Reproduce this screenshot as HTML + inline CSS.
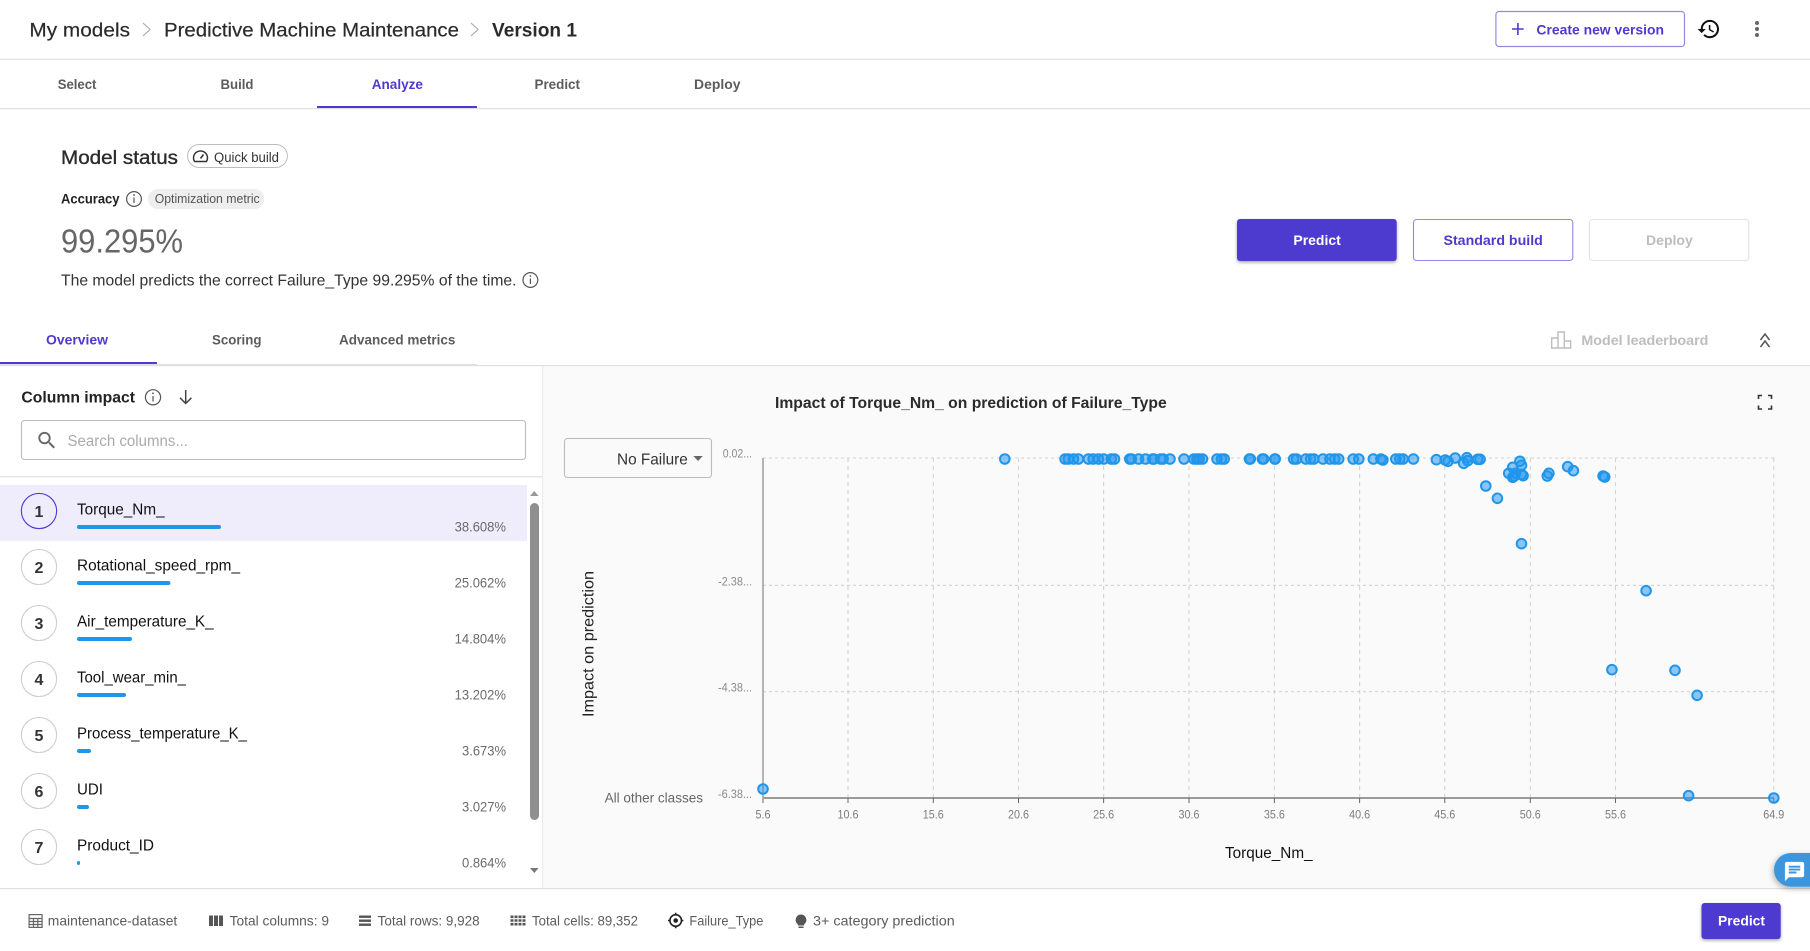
<!DOCTYPE html>
<html lang="en">
<head>
<meta charset="utf-8">
<title>Predictive Machine Maintenance - Version 1</title>
<style>
html,body{margin:0;padding:0;background:#fff;width:1810px;height:951px;overflow:hidden}
svg{display:block}
text{font-family:"Liberation Sans",Arial,sans-serif}
.b{font-weight:700}
.tab{font-size:14px;font-weight:700;fill:#5c5c5c}
.pri{fill:#4e3acf}
.name{font-size:16px;fill:#111}
.pct{font-size:14px;fill:#6b6b6b}
.num{font-size:16px;font-weight:700;fill:#333;text-anchor:middle}
.foot{font-size:14px;fill:#5c5c5c}
.xt{font-size:12px;fill:#7d7d7d;text-anchor:middle}
.yt{font-size:12px;fill:#8a8a8a}
.pts circle{fill:rgba(33,150,243,.52);stroke:#2196e8;stroke-width:2}
</style>
</head>
<body>
<svg xmlns="http://www.w3.org/2000/svg" width="1810" height="951" viewBox="0 0 1810 951">
<defs>
<filter id="sh" x="-20%" y="-20%" width="140%" height="150%"><feDropShadow dx="0" dy="1.5" stdDeviation="1.5" flood-color="#000" flood-opacity=".35"/></filter>
<filter id="sh2" x="-30%" y="-30%" width="160%" height="170%"><feDropShadow dx="-1" dy="2" stdDeviation="3" flood-color="#000" flood-opacity=".3"/></filter>
</defs>
<rect width="1810" height="951" fill="#fff"/>

<!-- breadcrumb -->
<text x="29.4" y="36.6" font-size="19.5" fill="#2b2b2b" stroke="#2b2b2b" stroke-width=".2" textLength="100.6" lengthAdjust="spacingAndGlyphs">My models</text>
<path d="M143 23l7 6.5-7 6.5" fill="none" stroke="#a8a8a8" stroke-width="1.1"/>
<text x="164" y="36.6" font-size="19.5" fill="#2b2b2b" stroke="#2b2b2b" stroke-width=".2" textLength="295" lengthAdjust="spacingAndGlyphs">Predictive Machine Maintenance</text>
<path d="M471 23l7 6.5-7 6.5" fill="none" stroke="#a8a8a8" stroke-width="1.1"/>
<text x="492" y="36.6" font-size="19.5" class="b" fill="#2b2b2b" textLength="85" lengthAdjust="spacingAndGlyphs">Version 1</text>

<rect x="1495.9" y="11.5" width="188.6" height="35" rx="3" fill="#fff" stroke="#9488e6" stroke-width="1.2"/>
<path d="M1512 29h11.7M1517.9 23v12" stroke="#4e3acf" stroke-width="1.6" fill="none"/>
<text x="1536.4" y="34.3" font-size="14" class="b pri" textLength="127.6" lengthAdjust="spacingAndGlyphs">Create new version</text>
<g transform="translate(1696.6,16.8) scale(1.02)"><path fill="#111" d="M13 3c-4.97 0-9 4.03-9 9H1l3.89 3.89.07.14L9 12H6c0-3.87 3.13-7 7-7s7 3.13 7 7-3.13 7-7 7c-1.93 0-3.68-.79-4.94-2.06l-1.42 1.42C8.27 19.99 10.51 21 13 21c4.97 0 9-4.03 9-9s-4.03-9-9-9zm-1 5v5l4.28 2.54.72-1.21-3.5-2.08V8H12z"/></g>
<g fill="#666"><circle cx="1757" cy="23" r="2"/><circle cx="1757" cy="29" r="2"/><circle cx="1757" cy="35" r="2"/></g>
<rect x="0" y="58.6" width="1810" height="1.2" fill="#e0e0e0"/>

<!-- top tabs -->
<text x="57.7" y="89" class="tab" textLength="38.7" lengthAdjust="spacingAndGlyphs">Select</text>
<text x="220.5" y="89" class="tab" textLength="33" lengthAdjust="spacingAndGlyphs">Build</text>
<text x="371.7" y="89" class="tab" style="fill:#4e3acf" textLength="51.3" lengthAdjust="spacingAndGlyphs">Analyze</text>
<text x="534.5" y="89" class="tab" textLength="45.5" lengthAdjust="spacingAndGlyphs">Predict</text>
<text x="694" y="89" class="tab" textLength="46.5" lengthAdjust="spacingAndGlyphs">Deploy</text>
<rect x="0" y="108" width="1810" height="1.2" fill="#e0e0e0"/>
<rect x="317" y="106" width="160" height="2" fill="#4e3acf"/>

<!-- model status -->
<text x="61" y="164" font-size="19" fill="#2b2b2b" textLength="117" lengthAdjust="spacingAndGlyphs" stroke="#2b2b2b" stroke-width=".35">Model status</text>
<rect x="187.6" y="144.5" width="99.8" height="23" rx="11.5" fill="#fff" stroke="#bdbdbd" stroke-width="1"/>
<path d="M194.5 161.5a7 7 0 1 1 12 0z" fill="none" stroke="#333" stroke-width="1.4" stroke-linejoin="round"/>
<path d="M200.5 158.5l3-4" stroke="#333" stroke-width="1.6"/>
<text x="214" y="162" font-size="13.5" fill="#333" textLength="65" lengthAdjust="spacingAndGlyphs">Quick build</text>

<text x="61" y="203.3" font-size="14" class="b" fill="#222" textLength="58.5" lengthAdjust="spacingAndGlyphs">Accuracy</text>
<g fill="none" stroke="#555" stroke-width="1.2"><circle cx="134" cy="199" r="7.4"/><path d="M134 197.5v5.5"/></g><circle cx="134" cy="195" r=".9" fill="#555"/>
<rect x="148" y="189" width="116.3" height="20" rx="10" fill="#eeeeee"/>
<text x="154.7" y="203" font-size="12.5" fill="#555" textLength="105" lengthAdjust="spacingAndGlyphs">Optimization metric</text>

<text x="61" y="252.3" font-size="33" fill="#666" textLength="122" lengthAdjust="spacingAndGlyphs">99.295%</text>
<text x="61" y="285.7" font-size="16" fill="#333" textLength="455.5" lengthAdjust="spacingAndGlyphs">The model predicts the correct Failure_Type 99.295% of the time.</text>
<g fill="none" stroke="#555" stroke-width="1.2"><circle cx="530.4" cy="280" r="7.4"/><path d="M530.4 278.5v5.5"/></g><circle cx="530.4" cy="276" r=".9" fill="#555"/>

<!-- action buttons -->
<rect x="1237" y="219" width="159.7" height="42" rx="3" fill="#4e3acf" filter="url(#sh)"/>
<text x="1293.4" y="245" font-size="14" class="b" fill="#fff" textLength="47.4" lengthAdjust="spacingAndGlyphs">Predict</text>
<rect x="1413.5" y="219.5" width="159.3" height="41" rx="3" fill="#fff" stroke="#9488e6" stroke-width="1.1"/>
<text x="1443.5" y="245" font-size="14" class="b pri" textLength="99.3" lengthAdjust="spacingAndGlyphs">Standard build</text>
<rect x="1589.5" y="219.5" width="159.3" height="41" rx="3" fill="#fff" stroke="#e2e2e2" stroke-width="1.1"/>
<text x="1646" y="245" font-size="14" class="b" fill="#bdbdbd" textLength="46.8" lengthAdjust="spacingAndGlyphs">Deploy</text>

<!-- sub tabs -->
<text x="46" y="344.5" class="tab" style="fill:#4e3acf" textLength="62" lengthAdjust="spacingAndGlyphs">Overview</text>
<text x="212" y="344.5" class="tab" textLength="49.5" lengthAdjust="spacingAndGlyphs">Scoring</text>
<text x="339" y="344.5" class="tab" textLength="116.4" lengthAdjust="spacingAndGlyphs">Advanced metrics</text>
<rect x="0" y="365" width="1810" height="1.2" fill="#e0e0e0"/>
<rect x="0" y="364" width="477" height="1.6" fill="#e0e0e0"/>
<rect x="0" y="362" width="157" height="2" fill="#4e3acf"/>

<path d="M1551.7 348v-10h6.3v10zM1558 348v-16h6.3v16zM1564.3 348v-7h6.3v7z" fill="none" stroke="#bdbdbd" stroke-width="1.4"/>
<text x="1581.4" y="345" class="tab" style="fill:#bdbdbd" textLength="127" lengthAdjust="spacingAndGlyphs">Model leaderboard</text>
<path d="M1760.5 340l4.5-6 4.5 6M1760.5 347l4.5-6 4.5 6" fill="none" stroke="#555" stroke-width="1.5"/>

<!-- chart panel bg -->
<rect x="543" y="366.2" width="1267" height="522" fill="#fafafa"/>
<rect x="542" y="366" width="1.2" height="522" fill="#ececec"/>

<!-- left panel -->
<text x="21.4" y="402.5" font-size="16" class="b" fill="#222" textLength="113.6" lengthAdjust="spacingAndGlyphs">Column impact</text>
<g fill="none" stroke="#555" stroke-width="1.2"><circle cx="153" cy="397.3" r="7.6"/><path d="M153 396v5.5"/></g><circle cx="153" cy="393.3" r=".9" fill="#555"/>
<path d="M185.7 390v13.5M180 397.8l5.7 5.7 5.7-5.7" fill="none" stroke="#444" stroke-width="1.5"/>
<rect x="21.5" y="420.5" width="504" height="39" rx="3" fill="#fff" stroke="#bcbcbc" stroke-width="1.1"/>
<g transform="translate(35.5,429) scale(.95)"><path fill="#666" d="M15.5 14h-.79l-.28-.27C15.41 12.59 16 11.11 16 9.5 16 5.91 13.09 3 9.5 3S3 5.91 3 9.5 5.91 16 9.5 16c1.61 0 3.09-.59 4.23-1.57l.27.28v.79l5 4.99L20.49 19l-4.99-5zm-6 0C7.01 14 5 11.99 5 9.5S7.01 5 9.5 5 14 7.01 14 9.5 11.99 14 9.5 14z"/></g>
<text x="67.5" y="445.8" font-size="15.5" fill="#ababab" textLength="120.5" lengthAdjust="spacingAndGlyphs">Search columns...</text>
<rect x="0" y="476.2" width="542" height="1.2" fill="#e0e0e0"/>

<rect x="0" y="485" width="527" height="56" fill="#efecfc"/>
<g fill="#fff" stroke="#cfcfcf" stroke-width="1.1">
<circle cx="39" cy="511" r="17.6" fill="#efecfc" stroke="#4e3acf"/>
<circle cx="39" cy="567" r="17.6"/>
<circle cx="39" cy="623" r="17.6"/>
<circle cx="39" cy="679" r="17.6"/>
<circle cx="39" cy="735" r="17.6"/>
<circle cx="39" cy="791" r="17.6"/>
<circle cx="39" cy="847" r="17.6"/>
</g>
<text x="39" y="517" class="num">1</text>
<text x="39" y="573" class="num">2</text>
<text x="39" y="629" class="num">3</text>
<text x="39" y="685" class="num">4</text>
<text x="39" y="741" class="num">5</text>
<text x="39" y="797" class="num">6</text>
<text x="39" y="853" class="num">7</text>

<text x="77" y="514.4" class="name" textLength="87.6" lengthAdjust="spacingAndGlyphs">Torque_Nm_</text>
<text x="77" y="570.4" class="name" textLength="163" lengthAdjust="spacingAndGlyphs">Rotational_speed_rpm_</text>
<text x="77" y="626.4" class="name" textLength="136.6" lengthAdjust="spacingAndGlyphs">Air_temperature_K_</text>
<text x="77" y="682.4" class="name" textLength="109" lengthAdjust="spacingAndGlyphs">Tool_wear_min_</text>
<text x="77" y="738.4" class="name" textLength="170" lengthAdjust="spacingAndGlyphs">Process_temperature_K_</text>
<text x="77" y="794.4" class="name" textLength="26" lengthAdjust="spacingAndGlyphs">UDI</text>
<text x="77" y="850.4" class="name" textLength="77" lengthAdjust="spacingAndGlyphs">Product_ID</text>

<g fill="#2196e8">
<rect x="77" y="525" width="144" height="4" rx="2"/>
<rect x="77" y="581" width="93.4" height="4" rx="2"/>
<rect x="77" y="637" width="55" height="4" rx="2"/>
<rect x="77" y="693" width="49" height="4" rx="2"/>
<rect x="77" y="749" width="14" height="4" rx="2"/>
<rect x="77" y="805" width="12" height="4" rx="2"/>
<rect x="77" y="861" width="3" height="4" rx="1.5"/>
</g>

<text x="454.6" y="531.7" class="pct" textLength="51.4" lengthAdjust="spacingAndGlyphs">38.608%</text>
<text x="454.6" y="587.7" class="pct" textLength="51.4" lengthAdjust="spacingAndGlyphs">25.062%</text>
<text x="454.6" y="643.7" class="pct" textLength="51.4" lengthAdjust="spacingAndGlyphs">14.804%</text>
<text x="454.6" y="699.7" class="pct" textLength="51.4" lengthAdjust="spacingAndGlyphs">13.202%</text>
<text x="462" y="755.7" class="pct" textLength="44" lengthAdjust="spacingAndGlyphs">3.673%</text>
<text x="462" y="811.7" class="pct" textLength="44" lengthAdjust="spacingAndGlyphs">3.027%</text>
<text x="462" y="867.7" class="pct" textLength="44" lengthAdjust="spacingAndGlyphs">0.864%</text>

<!-- scrollbar -->
<path d="M530 496l4.3-5 4.3 5z" fill="#999"/>
<rect x="530" y="503" width="9" height="317" rx="4.5" fill="#8f8f8f"/>
<path d="M530 868l4.3 5 4.3-5z" fill="#777"/>

<!-- chart -->
<g fill="none" stroke="#d2d2d2" stroke-width="1.1">
<path stroke-dasharray="3 3" d="M763 458H1774M763 585.3H1774M763 691.7H1774"/>
<path stroke-dasharray="4 4" d="M848 458V798M933.3 458V798M1018.5 458V798M1103.6 458V798M1189 458V798M1274.4 458V798M1359.6 458V798M1444.8 458V798M1530.3 458V798M1615.5 458V798M1773.8 458V798"/>
</g>
<path d="M763 458V803" stroke="#a3a3a3" stroke-width="1.6" fill="none"/>
<path d="M763 798H1774" stroke="#9b9b9b" stroke-width="2" fill="none"/>
<path d="M848 798v5M933.3 798v5M1018.5 798v5M1103.6 798v5M1189 798v5M1274.4 798v5M1359.6 798v5M1444.8 798v5M1530.3 798v5M1615.5 798v5M1773.8 798v5" stroke="#666" stroke-width="1" fill="none"/>

<text x="722.8" y="457.7" class="yt" textLength="29.2" lengthAdjust="spacingAndGlyphs">0.02...</text>
<text x="718" y="585.7" class="yt" textLength="34" lengthAdjust="spacingAndGlyphs">-2.38...</text>
<text x="718" y="691.7" class="yt" textLength="34" lengthAdjust="spacingAndGlyphs">-4.38...</text>
<text x="718" y="798" class="yt" textLength="34" lengthAdjust="spacingAndGlyphs">-6.38...</text>

<text x="763" y="818.7" class="xt" textLength="15" lengthAdjust="spacingAndGlyphs">5.6</text>
<text x="848" y="818.7" class="xt" textLength="21" lengthAdjust="spacingAndGlyphs">10.6</text>
<text x="933.3" y="818.7" class="xt" textLength="21" lengthAdjust="spacingAndGlyphs">15.6</text>
<text x="1018.5" y="818.7" class="xt" textLength="21" lengthAdjust="spacingAndGlyphs">20.6</text>
<text x="1103.6" y="818.7" class="xt" textLength="21" lengthAdjust="spacingAndGlyphs">25.6</text>
<text x="1189" y="818.7" class="xt" textLength="21" lengthAdjust="spacingAndGlyphs">30.6</text>
<text x="1274.4" y="818.7" class="xt" textLength="21" lengthAdjust="spacingAndGlyphs">35.6</text>
<text x="1359.6" y="818.7" class="xt" textLength="21" lengthAdjust="spacingAndGlyphs">40.6</text>
<text x="1444.8" y="818.7" class="xt" textLength="21" lengthAdjust="spacingAndGlyphs">45.6</text>
<text x="1530.3" y="818.7" class="xt" textLength="21" lengthAdjust="spacingAndGlyphs">50.6</text>
<text x="1615.5" y="818.7" class="xt" textLength="21" lengthAdjust="spacingAndGlyphs">55.6</text>
<text x="1773.8" y="818.7" class="xt" textLength="21" lengthAdjust="spacingAndGlyphs">64.9</text>

<text x="775" y="407.8" font-size="15.5" class="b" fill="#2b2b2b" textLength="391.7" lengthAdjust="spacingAndGlyphs">Impact of Torque_Nm_ on prediction of Failure_Type</text>
<path d="M1758.5 399v-3.5h3.5M1768 395.5h3.5v3.5M1771.5 405.5v3.5h-3.5M1762 409h-3.5v-3.5" fill="none" stroke="#333" stroke-width="1.6"/>

<rect x="564.5" y="438.5" width="147" height="39" rx="3" fill="#fafafa" stroke="#bcbcbc" stroke-width="1.1"/>
<text x="617" y="464.7" font-size="16" fill="#333" textLength="70.8" lengthAdjust="spacingAndGlyphs">No Failure</text>
<path d="M693.4 456h9.3l-4.65 5z" fill="#666"/>

<text transform="translate(593.4,717) rotate(-90)" font-size="16" fill="#222" textLength="146" lengthAdjust="spacingAndGlyphs">Impact on prediction</text>
<text x="604.6" y="802.3" font-size="14" fill="#666" textLength="98.4" lengthAdjust="spacingAndGlyphs">All other classes</text>
<text x="1225" y="858.2" font-size="16" fill="#111" textLength="87.6" lengthAdjust="spacingAndGlyphs">Torque_Nm_</text>

<g class="pts">
<circle cx="763" cy="789" r="4.8"/><circle cx="1004.8" cy="459" r="4.8"/>
<circle cx="1065.1" cy="459" r="4.8"/><circle cx="1068.3" cy="459" r="4.8"/><circle cx="1073.5" cy="459" r="4.8"/><circle cx="1078.4" cy="459" r="4.8"/><circle cx="1088.4" cy="459" r="4.8"/><circle cx="1093.2" cy="459" r="4.8"/><circle cx="1098.5" cy="459" r="4.8"/><circle cx="1103.7" cy="459" r="4.8"/><circle cx="1111.3" cy="459" r="4.8"/><circle cx="1114.5" cy="459" r="4.8"/>
<circle cx="1129.8" cy="459" r="4.8"/><circle cx="1131.4" cy="459" r="4.8"/><circle cx="1138.6" cy="459" r="4.8"/><circle cx="1145.5" cy="459" r="4.8"/><circle cx="1152.7" cy="459" r="4.8"/><circle cx="1153.9" cy="459" r="4.8"/><circle cx="1160.7" cy="459" r="4.8"/><circle cx="1163.1" cy="459" r="4.8"/><circle cx="1170" cy="459" r="4.8"/>
<circle cx="1184" cy="459" r="4.8"/><circle cx="1194" cy="459" r="4.8"/><circle cx="1196.9" cy="459" r="4.8"/><circle cx="1199.3" cy="459" r="4.8"/><circle cx="1202.5" cy="459" r="4.8"/><circle cx="1217" cy="459" r="4.8"/><circle cx="1221.4" cy="459" r="4.8"/><circle cx="1224.2" cy="459" r="4.8"/>
<circle cx="1249.5" cy="459" r="4.8"/><circle cx="1250.3" cy="459" r="4.8"/><circle cx="1262.4" cy="459" r="4.8"/><circle cx="1263.6" cy="459" r="4.8"/><circle cx="1275.2" cy="459" r="4.8"/><circle cx="1274.8" cy="459" r="4.8"/><circle cx="1293.7" cy="459" r="4.8"/><circle cx="1296.5" cy="459" r="4.8"/><circle cx="1305.8" cy="459" r="4.8"/><circle cx="1310.6" cy="459" r="4.8"/><circle cx="1313.8" cy="459" r="4.8"/><circle cx="1323" cy="459" r="4.8"/><circle cx="1329.9" cy="459" r="4.8"/><circle cx="1334.7" cy="459" r="4.8"/><circle cx="1338.7" cy="459" r="4.8"/><circle cx="1353.2" cy="459" r="4.8"/><circle cx="1358.8" cy="459" r="4.8"/><circle cx="1373.3" cy="459" r="4.8"/><circle cx="1380.9" cy="459" r="4.8"/><circle cx="1382.9" cy="460" r="4.8"/><circle cx="1395.8" cy="459" r="4.8"/><circle cx="1399.8" cy="459" r="4.8"/><circle cx="1403" cy="459" r="4.8"/><circle cx="1413.4" cy="459" r="4.8"/>
<circle cx="1436.4" cy="459.7" r="4.8"/><circle cx="1445.2" cy="460" r="4.8"/><circle cx="1448" cy="461.3" r="4.8"/><circle cx="1455.2" cy="458" r="4.8"/><circle cx="1466.9" cy="457.7" r="4.8"/><circle cx="1467.7" cy="460.7" r="4.8"/><circle cx="1463.7" cy="463.3" r="4.8"/><circle cx="1477.7" cy="459.3" r="4.8"/><circle cx="1480.1" cy="459.3" r="4.8"/>
<circle cx="1485.8" cy="486" r="4.8"/><circle cx="1497.4" cy="498.3" r="4.8"/><circle cx="1519.9" cy="461.3" r="4.8"/><circle cx="1521.5" cy="465.3" r="4.8"/><circle cx="1512.7" cy="467.3" r="4.8"/><circle cx="1508.7" cy="473.3" r="4.8"/><circle cx="1515.5" cy="473.3" r="4.8"/><circle cx="1512.7" cy="477.3" r="4.8"/><circle cx="1514.3" cy="476" r="4.8"/><circle cx="1521.5" cy="474.3" r="4.8"/><circle cx="1523.1" cy="475.7" r="4.8"/>
<circle cx="1547.3" cy="476" r="4.8"/><circle cx="1548.9" cy="473.3" r="4.8"/><circle cx="1567.7" cy="466.7" r="4.8"/><circle cx="1573.4" cy="470.7" r="4.8"/><circle cx="1603.1" cy="476" r="4.8"/><circle cx="1604.7" cy="477" r="4.8"/>
<circle cx="1521.5" cy="543.7" r="4.8"/><circle cx="1646.1" cy="590.7" r="4.8"/><circle cx="1611.9" cy="669.7" r="4.8"/><circle cx="1675" cy="670.3" r="4.8"/><circle cx="1697.1" cy="695.3" r="4.8"/><circle cx="1688.6" cy="795.7" r="4.8"/><circle cx="1773.8" cy="798" r="4.8"/>
</g>

<!-- footer -->
<rect x="0" y="888" width="1810" height="1.2" fill="#e0e0e0"/>
<g transform="translate(28.5,914)" fill="none" stroke="#666" stroke-width="1.2"><rect x=".6" y=".6" width="13" height="12.8"/><path d="M.6 4.5h13M.6 7.5h13M.6 10.5h13M5 4.5v9M9.3 4.5v9"/></g>
<text x="47.8" y="925.7" class="foot" textLength="129.5" lengthAdjust="spacingAndGlyphs">maintenance-dataset</text>
<g fill="#555"><rect x="209" y="915.5" width="4" height="10.5"/><rect x="214" y="915.5" width="4" height="10.5"/><rect x="219" y="915.5" width="4" height="10.5"/></g>
<text x="229.6" y="925.7" class="foot" textLength="99.4" lengthAdjust="spacingAndGlyphs">Total columns: 9</text>
<g fill="#555"><rect x="359" y="915.5" width="12" height="2.4"/><rect x="359" y="919.5" width="12" height="2.4"/><rect x="359" y="923.5" width="12" height="2.4"/></g>
<text x="377.6" y="925.7" class="foot" textLength="102" lengthAdjust="spacingAndGlyphs">Total rows: 9,928</text>
<g fill="#555"><path d="M510.5 915.5h3v2.6h-3zM514.5 915.5h3v2.6h-3zM518.5 915.5h3v2.6h-3zM522.5 915.5h3v2.6h-3zM510.5 919.2h3v2.6h-3zM514.5 919.2h3v2.6h-3zM518.5 919.2h3v2.6h-3zM522.5 919.2h3v2.6h-3zM510.5 922.9h3v2.6h-3zM514.5 922.9h3v2.6h-3zM518.5 922.9h3v2.6h-3zM522.5 922.9h3v2.6h-3z"/></g>
<text x="532" y="925.7" class="foot" textLength="106" lengthAdjust="spacingAndGlyphs">Total cells: 89,352</text>
<g fill="none" stroke="#222" stroke-width="1.6"><circle cx="675.7" cy="920.5" r="5.8"/><path d="M675.7 912.8v2.2M675.7 926v2.2M668 920.5h2.2M681.2 920.5h2.2"/></g><circle cx="675.7" cy="920.5" r="2.3" fill="#222"/>
<text x="689.4" y="925.7" class="foot" textLength="74" lengthAdjust="spacingAndGlyphs">Failure_Type</text>
<path d="M801 914.5a5.4 5.4 0 0 1 3.2 9.7v1.3h-6.4v-1.3a5.4 5.4 0 0 1 3.2-9.7zM798.5 926.5h5v1.5h-5z" fill="#555"/>
<text x="813" y="925.7" class="foot" textLength="141.7" lengthAdjust="spacingAndGlyphs">3+ category prediction</text>

<rect x="1701.5" y="903" width="79.2" height="36" rx="3" fill="#4e3acf" filter="url(#sh)"/>
<text x="1718" y="925.7" font-size="14" class="b" fill="#fff" textLength="47" lengthAdjust="spacingAndGlyphs">Predict</text>

<!-- chat bubble -->
<rect x="1774" y="853" width="60" height="33.7" rx="16.8" fill="#3d95dc" filter="url(#sh2)"/>
<g transform="translate(1783,860) scale(.96)"><path fill="#fff" d="M20 2H4c-1.1 0-2 .9-2 2v18l4-4h14c1.1 0 2-.9 2-2V4c0-1.1-.9-2-2-2zM6 9h12v2H6V9zm8 5H6v-2h8v2zm4-6H6V6h12v2z"/></g>
</svg>
</body>
</html>
